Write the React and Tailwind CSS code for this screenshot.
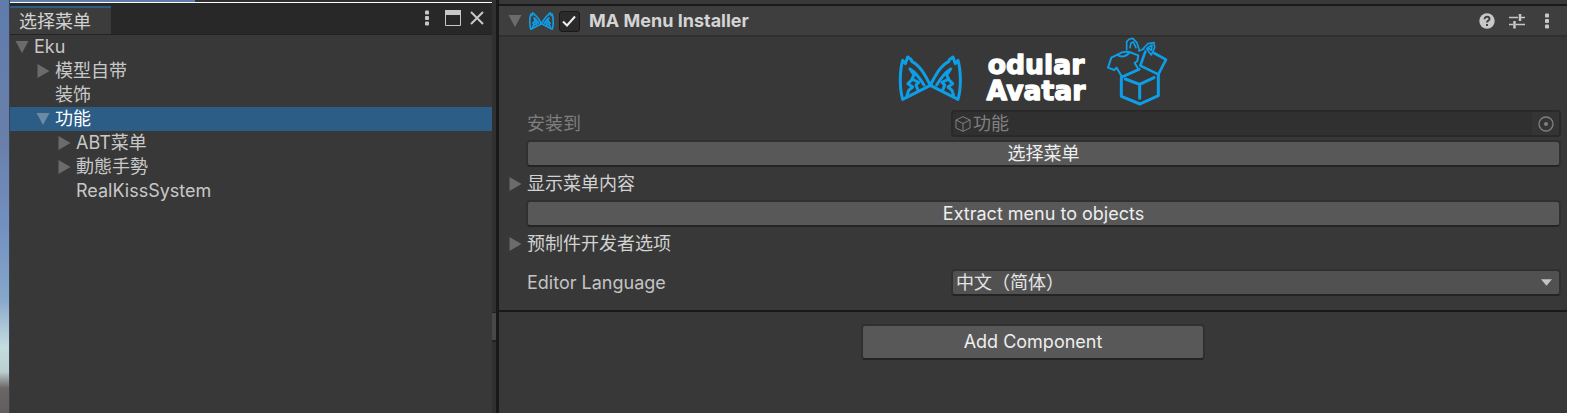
import { useState } from "react";

const TREE = [
  { id: 1, name: "Eku", level: 0, arrow: "open" },
  { id: 2, name: "模型自带", level: 1, arrow: "closed" },
  { id: 3, name: "装饰", level: 1 },
  { id: 4, name: "功能", level: 1, arrow: "open" },
  { id: 5, name: "ABT菜单", level: 2, arrow: "closed" },
  { id: 6, name: "動態手勢", level: 2, arrow: "closed" },
  { id: 7, name: "RealKissSystem", level: 2 },
];

const INDENT = ["pl-0", "pl-[21px]", "pl-[42px]"];

const BUTTON =
  "rounded-[4px] border-2 border-[#303030] border-b-[#242424] bg-[#585858] text-center text-[#eeeeee] hover:bg-[#676767]";

function Arrow({ open, className = "text-[#6b6b6b]" }) {
  return (
    <svg viewBox="0 0 14 14" className={`size-[14px] shrink-0 ${className}`} fill="currentColor">
      {open ? <path d="M0.5 1h13L7 13z" /> : <path d="M1.5 0l12 7-12 7z" />}
    </svg>
  );
}

function Dots() {
  return (
    <svg viewBox="0 0 4 16" className="h-4 w-1" fill="currentColor">
      <rect x="0" y="0.5" width="4" height="4" rx="1" />
      <rect x="0" y="6" width="4" height="4" rx="1" />
      <rect x="0" y="11.5" width="4" height="4" rx="1" />
    </svg>
  );
}

function Ear() {
  return (
    <>
      <path d="M38 205C28 170 29 120 38 88L46 98L53 78L64 86L66 92C90 103 106 134 121 163Z" />
      <path d="M60 114C76 124 90 142 102 162M60 114L72 132L66 144L86 154L78 162L84 178M66 146L54 158L68 168L56 178L51 194" />
    </>
  );
}

// Pair of ears that form the letter M
function Ears() {
  return (
    <>
      <Ear />
      <g transform="translate(242 0) scale(-1 1)">
        <Ear />
      </g>
    </>
  );
}

function Logo() {
  return (
    <svg
      viewBox="24 18 810 216"
      className="h-[72px] w-[270px]"
      role="img"
      aria-label="Modular Avatar"
      fill="none"
      stroke="#0d9ee8"
      strokeWidth="9"
      strokeLinecap="round"
      strokeLinejoin="round"
    >
      <Ears />
      <g
        fill="#ffffff"
        stroke="#ffffff"
        strokeWidth="4"
        className="font-['DejaVu_Sans',sans-serif] font-bold"
        fontSize="80"
        textAnchor="middle"
      >
        <text x="438" y="130">odular</text>
        <text x="438" y="208">Avatar</text>
      </g>
      <g transform="translate(642 18)">
        <path d="M52 122V178L108 201L163 176V112M64 126L107 142L150 122M107 142V184" />
        <path d="M52 121L106 97M124 44L109 86L163 112L186 68L150 48" strokeWidth="8" />
        <path
          d="M12 92L22 62L42 52C52 45 66 44 76 45L103 55L100 72L92 78L104 98L54 120L38 92L31 99ZM40 53C50 62 68 60 76 46"
          strokeWidth="6"
        />
        <path
          d="M68 38V14L76 6L86 4L98 16L106 38M78 32L81 18L88 15L96 32M104 42L120 36M116 36L132 20L150 17L152 32L142 54L128 36M130 33L144 24L142 40Z"
          strokeWidth="5"
        />
      </g>
    </svg>
  );
}

function MenuTree() {
  const [selected, setSelected] = useState(4);

  return (
    <ul>
      {TREE.map((item) => (
        <li key={item.id}>
          <button
            type="button"
            onClick={() => setSelected(item.id)}
            className={`flex h-6 w-full items-center text-left leading-[22px] ${INDENT[item.level]} ${
              selected === item.id ? "bg-[#2c5d87] text-white" : "text-[#c8c8c8]"
            }`}
          >
            <span className="flex w-6 shrink-0 justify-center">
              {item.arrow && (
                <Arrow
                  open={item.arrow === "open"}
                  className={selected === item.id ? "text-[#6c8aa3]" : "text-[#6b6b6b]"}
                />
              )}
            </span>
            {item.name}
          </button>
        </li>
      ))}
    </ul>
  );
}

function MenuWindow() {
  return (
    <section className="flex w-[492px] shrink-0">
      <div className="w-[9px] shrink-0 bg-[linear-gradient(to_bottom,#5f7cab_0%,#6a80ab_35%,#7390c0_55%,#86a6ca_72%,#c4dde0_84%,#bccfce_90%,#6b6665_94%,#625c5c_100%)]" />
      <div className="flex min-w-0 flex-1 flex-col border-l border-[#3a4350] bg-[#383838]">
        <div className="flex h-0.5">
          <div className="w-[185px] bg-[#5f7cab]" />
          <div className="flex-1 bg-[#303030]" />
        </div>
        <header className="flex h-[33px] items-end border-t border-b border-t-white border-b-[#232323] bg-[#282828]">
          <div className="h-7 w-[101px] border-t-2 border-[#2c5d87] bg-[#3c3c3c] pl-[9px] leading-[28px] text-[#d2d2d2]">
            选择菜单
          </div>
          <div className="flex h-8 flex-1 items-center justify-end gap-2 pr-[7px] text-[#c8c8c8]">
            <button type="button" aria-label="Window menu" className="flex w-5 justify-center">
              <Dots />
            </button>
            <button type="button" aria-label="Maximize">
              <svg viewBox="0 0 16 16" className="size-4" fill="none" stroke="currentColor">
                <path d="M0.5 0.5h15v15h-15z" />
                <path d="M0 2.5h16" strokeWidth="5" />
              </svg>
            </button>
            <button type="button" aria-label="Close">
              <svg viewBox="0 0 16 16" className="size-4" fill="none" stroke="currentColor" strokeWidth="2">
                <path d="M2 2l12 12M14 2L2 14" />
              </svg>
            </button>
          </div>
        </header>
        <MenuTree />
      </div>
    </section>
  );
}

// Narrow scroll strip and the dock border between the two panels
function Splitter() {
  return (
    <div className="flex w-[7px] shrink-0 border-r-[3px] border-[#191919] bg-[#303030]">
      <div className="mt-[312px] h-[30px] w-full border-t border-b-2 border-[#222222] bg-[#484848]" />
    </div>
  );
}

function ComponentHeader() {
  const [enabled, setEnabled] = useState(true);

  return (
    <header className="flex h-[33px] items-center border-t-2 border-b-2 border-t-[#191919] border-b-[#303030] bg-[#3e3e3e] pt-px pr-3 pl-[9px] text-[#c8c8c8]">
      <Arrow open />
      <svg
        viewBox="24 70 194 142"
        className="ml-[7px] h-5 w-[25px]"
        fill="none"
        stroke="#0d9ee8"
        strokeWidth="13"
        strokeLinejoin="round"
      >
        <Ears />
      </svg>
      <label className="flex items-center font-bold text-[#d4d4d4]">
        <span className="ml-1 grid size-[22px] place-items-center">
          <input
            type="checkbox"
            checked={enabled}
            onChange={(e) => setEnabled(e.target.checked)}
            className="col-start-1 row-start-1 size-[21px] appearance-none rounded-[3px] border border-[#191919] bg-[#2a2a2a]"
          />
          {enabled && (
            <svg
              viewBox="0 0 16 16"
              className="pointer-events-none col-start-1 row-start-1 size-4"
              fill="none"
              stroke="#f0f0f0"
              strokeWidth="2"
            >
              <path d="M2 8.5l4 4L14 3.5" />
            </svg>
          )}
        </span>
        <span className="ml-[9px]">MA Menu Installer</span>
      </label>
      <div className="ml-auto flex items-center gap-3.5">
        <button type="button" aria-label="Help">
          <svg viewBox="0 0 16 16" className="size-4">
            <circle cx="8" cy="8" r="7.7" fill="currentColor" />
            <path
              d="M5.6 6.2C5.6 4.6 6.6 3.8 8 3.8s2.5 0.8 2.5 2.1C10.5 7.5 8 7.6 8 9.6M8 11v2"
              fill="none"
              stroke="#3e3e3e"
              strokeWidth="1.9"
            />
          </svg>
        </button>
        <button type="button" aria-label="Presets">
          <svg viewBox="0 0 16 16" className="size-4" fill="none" stroke="currentColor">
            <path d="M0 4.5h9M12 4.5h4M0 11.5h4M7 11.5h9" strokeWidth="1.5" />
            <path d="M11 1v7M5.5 8v7.5" strokeWidth="2.5" />
          </svg>
        </button>
        <button type="button" aria-label="Component menu" className="flex w-4 justify-center">
          <Dots />
        </button>
      </div>
    </header>
  );
}

function Foldout({ children }) {
  return (
    <button type="button" className="flex h-[33px] items-center text-[#d2d2d2]">
      <span className="flex w-7 shrink-0 pl-[9px]">
        <Arrow />
      </span>
      {children}
    </button>
  );
}

function Inspector() {
  const [language, setLanguage] = useState("zh-hans");

  return (
    <main className="flex min-w-0 flex-1 flex-col bg-[#383838] pt-1">
      <ComponentHeader />

      <div className="flex h-[73px] justify-center">
        <Logo />
      </div>

      <div className="flex flex-col pr-1.5">
        <div className="flex h-[27px] items-center pl-7">
          <label htmlFor="install-target" className="w-[41%] text-[#7e7e7e]">
            安装到
          </label>
          <div className="flex h-[27px] flex-1 items-center rounded-[4px] border-2 border-[#292929] bg-[#303030] pl-0.5 text-[#808080]">
            <svg viewBox="0 0 16 16" className="size-4 shrink-0" fill="none" stroke="currentColor">
              <path d="M8 0.7L15 4v8l-7 3.3L1 12V4zM1 4l7 3.5L15 4M8 7.5v7.8" />
            </svg>
            <input
              id="install-target"
              type="text"
              value="功能"
              readOnly
              className="ml-0.5 min-w-0 flex-1 bg-transparent outline-none"
            />
            <button
              type="button"
              aria-label="Select object"
              className="flex h-full w-[27px] items-center justify-center bg-[#343434]"
            >
              <svg viewBox="0 0 16 16" className="size-4" fill="none" stroke="currentColor">
                <circle cx="8" cy="8" r="7" strokeWidth="1.3" />
                <circle cx="8" cy="8" r="2" fill="currentColor" stroke="none" />
              </svg>
            </button>
          </div>
        </div>

        <button type="button" className={`mt-[3px] ml-[27px] h-[27px] leading-[23px] ${BUTTON}`}>
          选择菜单
        </button>
        <Foldout>显示菜单内容</Foldout>
        <button type="button" className={`ml-[27px] h-[27px] leading-[23px] ${BUTTON}`}>
          Extract menu to objects
        </button>
        <Foldout>预制件开发者选项</Foldout>

        <div className="mt-[9px] flex h-[27px] items-center pl-7">
          <label htmlFor="language" className="w-[41%] text-[#c4c4c4]">
            Editor Language
          </label>
          <div className="grid flex-1 items-center">
            <select
              id="language"
              value={language}
              onChange={(e) => setLanguage(e.target.value)}
              className="col-start-1 row-start-1 h-[27px] appearance-none rounded-[4px] border-2 border-[#303030] border-b-[#242424] bg-[#515151] pl-[3px] leading-[23px] text-[#e4e4e4]"
            >
              <option value="zh-hans">中文（简体）</option>
              <option value="en-us">English</option>
              <option value="ja-jp">日本語</option>
            </select>
            <svg
              viewBox="0 0 10 6"
              className="pointer-events-none col-start-1 row-start-1 mr-[9px] h-[7px] w-[11px] justify-self-end"
              fill="#c4c4c4"
            >
              <path d="M0 0h10L5 6z" />
            </svg>
          </div>
        </div>
      </div>

      <div className="mt-[14px] flex justify-center border-t-2 border-[#191919] pt-3">
        <button type="button" className={`h-9 w-[344px] leading-8 ${BUTTON}`}>
          Add Component
        </button>
      </div>
    </main>
  );
}

export default function App() {
  return (
    <div className="flex min-h-screen bg-white pr-1.5 font-['Inter','Noto_Sans_CJK_SC',sans-serif] text-[18px] leading-6">
      <MenuWindow />
      <Splitter />
      <Inspector />
    </div>
  );
}
